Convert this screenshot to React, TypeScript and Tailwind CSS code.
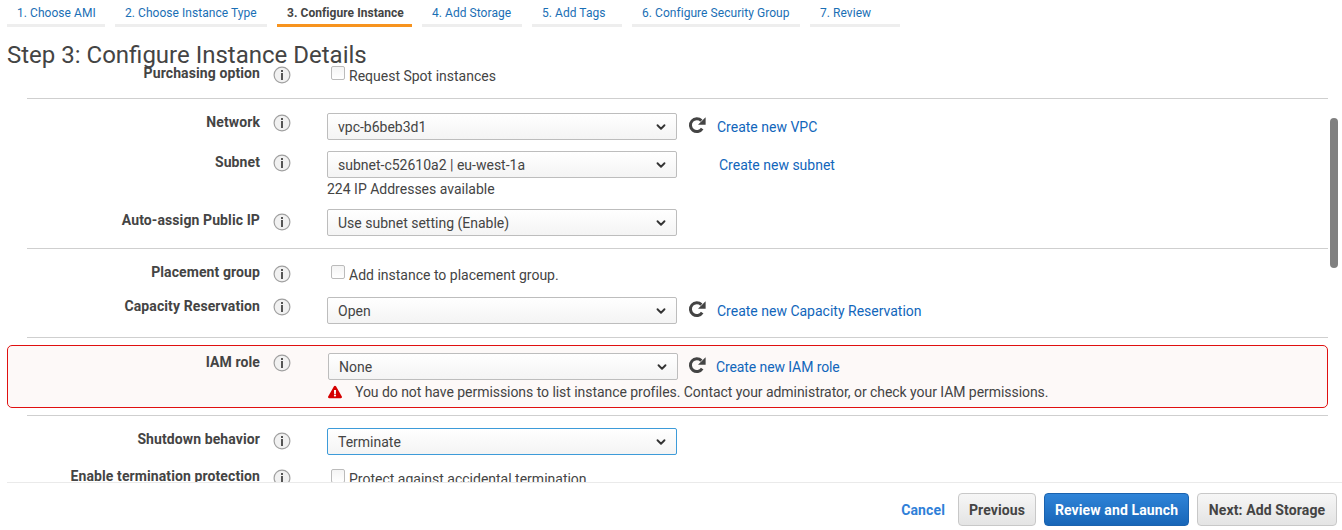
import { ChevronDown } from "lucide-react";
import type { ReactNode } from "react";
import { FaExclamationTriangle } from "react-icons/fa";

const tabs = [
  { label: "1. Choose AMI", width: "w-[98px]" },
  { label: "2. Choose Instance Type", width: "w-[152px]" },
  { label: "3. Configure Instance", width: "w-[135px]", active: true },
  { label: "4. Add Storage", width: "w-[100px]" },
  { label: "5. Add Tags", width: "w-[90px]" },
  { label: "6. Configure Security Group", width: "w-[168px]" },
  { label: "7. Review", width: "w-[90px]" },
];

function InfoIcon() {
  return (
    <svg width="18" height="18" viewBox="0 0 18 18" className="shrink-0">
      <circle cx="9" cy="9" r="7.9" fill="#f1f1f1" stroke="#a0a0a0" strokeWidth="1.2" />
      <rect x="8" y="4" width="2" height="2" fill="#555" />
      <rect x="8" y="7" width="2" height="7" fill="#555" />
    </svg>
  );
}

function RefreshIcon() {
  return (
    <svg width="18" height="18" viewBox="0 0 18 18" className="shrink-0 -mt-[3px]">
      <path d="M14.2 12.6A6.4 6.4 0 1 1 13.4 4.6" fill="none" stroke="#444" strokeWidth="3" />
      <path d="M17.6 1.2V8.8H10Z" fill="#444" />
    </svg>
  );
}

function Select({ value, focused }: { value: string; focused?: boolean }) {
  return (
    <div
      className={`w-[350px] h-[27px] flex items-center justify-between pl-[10px] pr-[8px] rounded-[2px] border bg-gradient-to-b from-white to-[#f4f4f4] text-[14px] text-[#444] ${
        focused ? "border-[#3d9bd9]" : "border-[#bdbdbd]"
      }`}
    >
      <span className="pt-px">{value}</span>
      <ChevronDown size={14} strokeWidth={3.2} className="text-[#333]" />
    </div>
  );
}

function Checkbox({ label }: { label: string }) {
  return (
    <div className="flex items-start pl-[4px] text-[14px] text-[#444]">
      <span className="w-[14px] h-[14px] mt-[1px] rounded-[2px] border border-[#bbb] bg-gradient-to-b from-[#f4f4f4] to-white" />
      <span className="ml-[4px] mt-[3px] leading-[16px]">{label}</span>
    </div>
  );
}

function Refresh({ link, inBox }: { link: string; inBox?: boolean }) {
  return (
    <div className={`flex items-center h-[27px] ${inBox ? "ml-[10px]" : "ml-[11px]"}`}>
      <RefreshIcon />
      <a className={`pt-px text-[14px] text-[#1166bb] ${inBox ? "ml-[10px] tracking-[-0.1px]" : "ml-[11px]"}`}>{link}</a>
    </div>
  );
}

function Row({
  label,
  children,
  labelPad = "pt-[1px]",
  iconPad = "pt-[1px]",
  inBox,
}: {
  label: string;
  children: ReactNode;
  labelPad?: string;
  iconPad?: string;
  inBox?: boolean;
}) {
  return (
    <div className="flex items-start">
      <div className={`${inBox ? "w-[252px]" : "w-[260px]"} ${labelPad} text-right text-[14px] leading-[16px] font-bold tracking-[0.1px] text-[#444]`}>
        {label}
      </div>
      <div className={`${inBox ? "ml-[13px] mr-[37px]" : "ml-[13px] mr-[36px]"} w-[18px] ${iconPad}`}>
        <InfoIcon />
      </div>
      <div className="flex-1">{children}</div>
    </div>
  );
}

function Divider({ margin }: { margin: string }) {
  return <div className={`${margin} ml-[27px] w-[1301px] h-px bg-[#cfcfcf]`} />;
}

export default function App() {
  return (
    <div className="relative h-[530px] w-[1342px] flex flex-col overflow-hidden bg-white font-['Roboto',sans-serif]">
      <nav className="flex gap-[10px] pl-[7px] h-[27px] shrink-0">
        {tabs.map((tab) => (
          <div
            key={tab.label}
            className={`${tab.width} h-[27px] pl-[10px] pt-[5px] text-[12px] leading-[16px] tracking-[0.05px] border-b-[3px] ${
              tab.active ? "border-[#f7931e] font-bold text-[#444]" : "border-[#eeeeee] text-[#1a6fb5]"
            }`}
          >
            {tab.label}
          </div>
        ))}
      </nav>

      <h1 className="h-[38px] shrink-0 pl-[7px] pt-[12px] text-[24px] leading-[32px] text-[#444]">
        Step 3: Configure Instance Details
      </h1>

      <main className="h-[417px] shrink-0 overflow-hidden">
        <Row label="Purchasing option" labelPad="pt-0">
          <Checkbox label="Request Spot instances" />
        </Row>
        <Divider margin="mt-[14px]" />

        <div className="mt-[14px]">
          <Row label="Network">
            <div className="flex">
              <Select value="vpc-b6beb3d1" />
              <Refresh link="Create new VPC" />
            </div>
          </Row>
        </div>

        <div className="mt-[11px]">
          <Row label="Subnet" labelPad="pt-[3px]" iconPad="pt-[3px]">
            <div className="flex">
              <Select value="subnet-c52610a2 | eu-west-1a" />
              <a className="ml-[42px] h-[27px] pt-px flex items-center text-[14px] text-[#1166bb]">Create new subnet</a>
            </div>
            <p className="mt-[3px] text-[14px] leading-[16px] text-[#444]">224 IP Addresses available</p>
          </Row>
        </div>

        <div className="mt-[12px]">
          <Row label="Auto-assign Public IP" labelPad="pt-[3px]" iconPad="pt-[4px]">
            <Select value="Use subnet setting (Enable)" />
          </Row>
        </div>
        <Divider margin="mt-[12px]" />

        <div className="mt-[15px]">
          <Row label="Placement group" labelPad="pt-0">
            <Checkbox label="Add instance to placement group." />
          </Row>
        </div>

        <div className="mt-[14px]">
          <Row label="Capacity Reservation">
            <div className="flex">
              <Select value="Open" />
              <Refresh link="Create new Capacity Reservation" />
            </div>
          </Row>
        </div>
        <Divider margin="mt-[13px]" />

        <section className="mt-[7px] ml-[7px] w-[1321px] h-[63px] pt-[7px] rounded-[5px] border border-[#e01010] bg-[#fdf9f8]">
          <Row label="IAM role" inBox>
            <div className="flex">
              <Select value="None" />
              <Refresh link="Create new IAM role" inBox />
            </div>
            <div className="flex items-center mt-[4px] text-[14px] leading-[16px] text-[#444]">
              <FaExclamationTriangle size={14} className="text-[#d50000]" />
              <span className="ml-[13px] tracking-[-0.05px]">
                You do not have permissions to list instance profiles. Contact your administrator, or check your IAM permissions.
              </span>
            </div>
          </Row>
        </section>
        <Divider margin="mt-[7px]" />

        <div className="mt-[12px]">
          <Row label="Shutdown behavior" labelPad="pt-[3px]" iconPad="pt-[4px]">
            <Select value="Terminate" focused />
          </Row>
        </div>

        <div className="mt-[13px]">
          <Row label="Enable termination protection" labelPad="pt-0">
            <Checkbox label="Protect against accidental termination" />
          </Row>
        </div>
      </main>

      <footer className="ml-[7px] flex-1 flex items-start justify-end pt-[10px] pr-[5px] border-t border-[#eaeaea] text-[14px] font-bold tracking-[0.12px]">
        <a className="mr-[13px] h-[33px] pt-px flex items-center text-[#2f80d8]">Cancel</a>
        <button className="w-[78px] h-[33px] pt-px rounded-[4px] border border-[#c8c8c8] bg-gradient-to-b from-[#f6f6f6] to-[#e4e4e4] text-[#444]">
          Previous
        </button>
        <button className="ml-[8px] w-[145px] h-[33px] pt-px rounded-[4px] border border-[#1a62ae] bg-gradient-to-b from-[#2f84d8] to-[#1766b8] text-white">
          Review and Launch
        </button>
        <button className="ml-[8px] w-[140px] h-[33px] pt-px rounded-[4px] border border-[#c8c8c8] bg-gradient-to-b from-[#f6f6f6] to-[#e4e4e4] text-[#444]">
          Next: Add Storage
        </button>
      </footer>

      <div className="absolute left-[1330px] top-[118px] w-[8px] h-[150px] rounded-full bg-[#808080]" />
    </div>
  );
}
